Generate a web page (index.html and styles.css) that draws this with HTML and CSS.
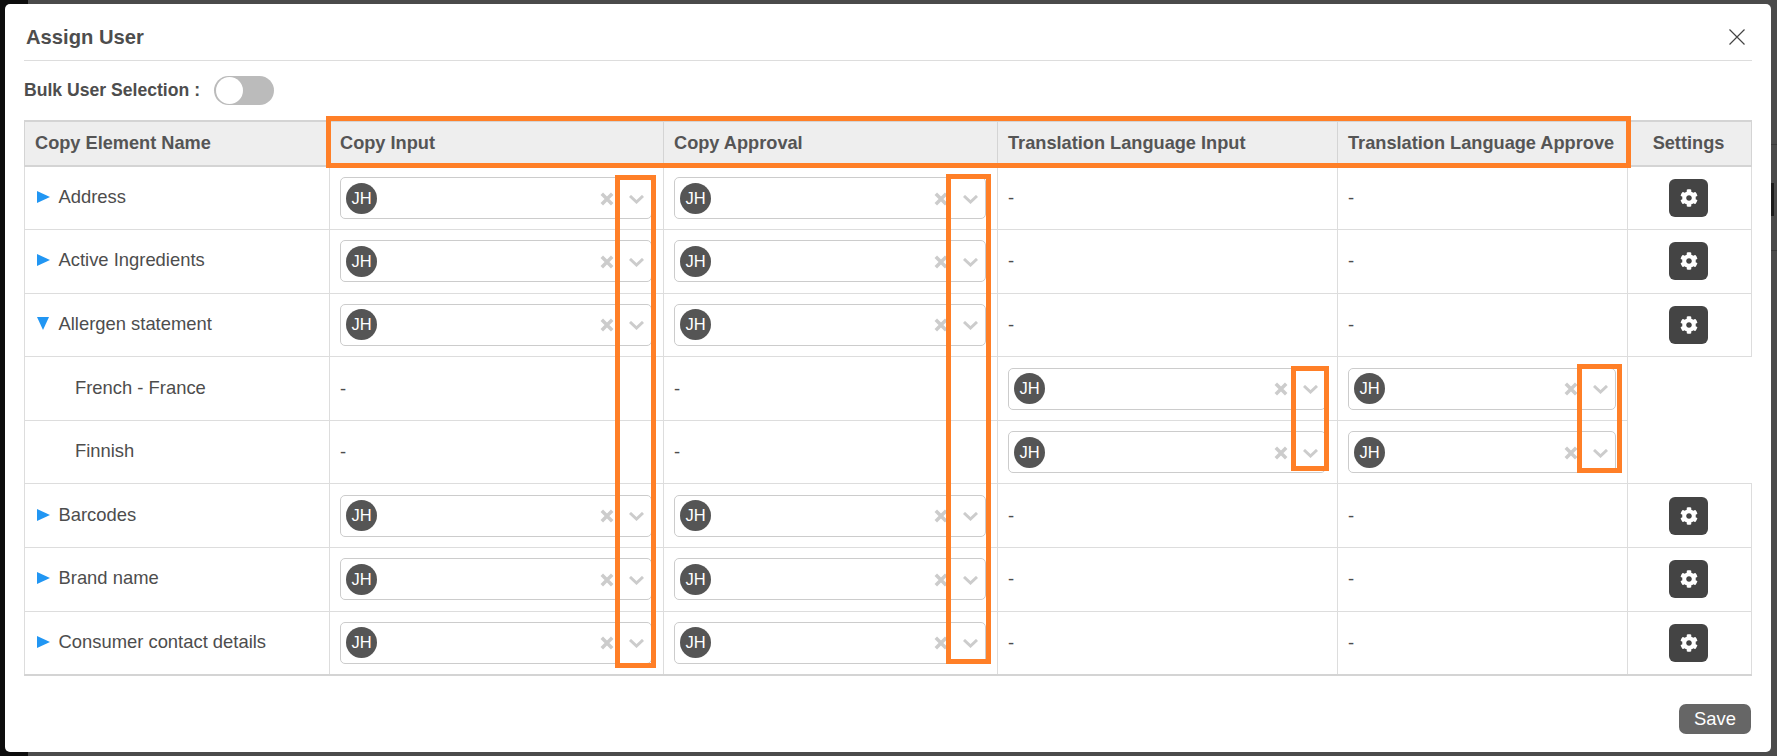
FILE: index.html
```html
<!DOCTYPE html>
<html lang="en">
<head>
<meta charset="utf-8">
<title>Assign User</title>
<link rel="stylesheet" href="styles.css">
</head>
<body>
<svg class="defs" width="0" height="0" aria-hidden="true">
  <symbol id="i-clear" viewBox="0 0 14 14"><path d="M1.800 1.800l10.400 10.400M12.200 1.800l-10.400 10.400" fill="none" stroke="currentColor" stroke-width="3.500"/></symbol>
  <symbol id="i-chev" viewBox="0 0 15 9"><path d="M1 1l6.500 6 6.500-6" fill="none" stroke="currentColor" stroke-width="3"/></symbol>
  <symbol id="i-gear" viewBox="0 0 512 512"><path fill="currentColor" d="M487.400 315.700l-42.600-24.600c4.300-23.200 4.300-47 0-70.200l42.600-24.600c4.900-2.800 7.100-8.600 5.500-14-11.100-35.600-30-67.800-54.700-94.600-3.800-4.100-10-5.100-14.800-2.300L380.800 110c-17.900-15.400-38.500-27.300-60.800-35.100V25.800c0-5.600-3.900-10.500-9.400-11.700-36.700-8.200-74.300-7.800-109.200 0-5.500 1.200-9.400 6.100-9.400 11.700V75c-22.200 7.900-42.800 19.800-60.800 35.100L88.700 85.500c-4.900-2.800-11-1.900-14.800 2.300-24.700 26.700-43.600 58.900-54.700 94.600-1.700 5.400.6 11.200 5.500 14L67.300 221c-4.300 23.200-4.300 47 0 70.200l-42.600 24.600c-4.900 2.800-7.100 8.600-5.500 14 11.100 35.600 30 67.800 54.700 94.600 3.800 4.100 10 5.100 14.800 2.300l42.600-24.600c17.900 15.400 38.500 27.300 60.800 35.100v49.200c0 5.600 3.900 10.500 9.400 11.700 36.700 8.200 74.300 7.800 109.200 0 5.500-1.200 9.400-6.100 9.400-11.700v-49.200c22.200-7.900 42.800-19.800 60.800-35.100l42.600 24.600c4.900 2.800 11 1.900 14.800-2.300 24.700-26.700 43.600-58.900 54.700-94.600 1.500-5.500-.7-11.300-5.600-14.100zM256 336c-44.100 0-80-35.900-80-80s35.900-80 80-80 80 35.900 80 80-35.900 80-80 80z"/></symbol>
</svg>

<div class="modal">
  <header class="modal-head">
    <h1 class="modal-title">Assign User</h1>
    <svg class="close" viewBox="0 0 16 16"><path d="M.5.500l15 15M15.500.500l-15 15" fill="none" stroke="currentColor" stroke-width="1.200"/></svg>
  </header>

  <div class="bulk">
    <span class="bulk-label">Bulk User Selection :</span>
    <span class="toggle"><span class="knob"></span></span>
  </div>

  <table class="grid">
    <colgroup>
      <col class="c1"><col class="c2"><col class="c3"><col class="c4"><col class="c5"><col class="c6">
    </colgroup>
    <thead>
      <tr>
        <th class="first">Copy Element Name</th>
        <th>Copy Input</th>
        <th>Copy Approval</th>
        <th>Translation Language Input</th>
        <th>Translation Language Approve</th>
        <th class="center">Settings</th>
      </tr>
    </thead>
    <tbody>
      <tr>
        <td class="first"><div class="name"><span class="tri"></span>Address</div></td>
        <td><div class="sel"><span class="ava">JH</span><svg class="x"><use href="#i-clear"/></svg><svg class="chev"><use href="#i-chev"/></svg></div></td>
        <td><div class="sel"><span class="ava">JH</span><svg class="x"><use href="#i-clear"/></svg><svg class="chev"><use href="#i-chev"/></svg></div></td>
        <td>-</td>
        <td>-</td>
        <td class="center"><button class="gear"><svg><use href="#i-gear"/></svg></button></td>
      </tr>
      <tr>
        <td class="first"><div class="name"><span class="tri"></span>Active Ingredients</div></td>
        <td><div class="sel"><span class="ava">JH</span><svg class="x"><use href="#i-clear"/></svg><svg class="chev"><use href="#i-chev"/></svg></div></td>
        <td><div class="sel"><span class="ava">JH</span><svg class="x"><use href="#i-clear"/></svg><svg class="chev"><use href="#i-chev"/></svg></div></td>
        <td>-</td>
        <td>-</td>
        <td class="center"><button class="gear"><svg><use href="#i-gear"/></svg></button></td>
      </tr>
      <tr>
        <td class="first"><div class="name"><span class="tri down"></span>Allergen statement</div></td>
        <td><div class="sel"><span class="ava">JH</span><svg class="x"><use href="#i-clear"/></svg><svg class="chev"><use href="#i-chev"/></svg></div></td>
        <td><div class="sel"><span class="ava">JH</span><svg class="x"><use href="#i-clear"/></svg><svg class="chev"><use href="#i-chev"/></svg></div></td>
        <td>-</td>
        <td>-</td>
        <td class="center"><button class="gear"><svg><use href="#i-gear"/></svg></button></td>
      </tr>
      <tr>
        <td class="first"><div class="name child">French - France</div></td>
        <td>-</td>
        <td>-</td>
        <td><div class="sel"><span class="ava">JH</span><svg class="x"><use href="#i-clear"/></svg><svg class="chev"><use href="#i-chev"/></svg></div></td>
        <td><div class="sel"><span class="ava">JH</span><svg class="x"><use href="#i-clear"/></svg><svg class="chev"><use href="#i-chev"/></svg></div></td>
      </tr>
      <tr>
        <td class="first"><div class="name child">Finnish</div></td>
        <td>-</td>
        <td>-</td>
        <td><div class="sel"><span class="ava">JH</span><svg class="x"><use href="#i-clear"/></svg><svg class="chev"><use href="#i-chev"/></svg></div></td>
        <td><div class="sel"><span class="ava">JH</span><svg class="x"><use href="#i-clear"/></svg><svg class="chev"><use href="#i-chev"/></svg></div></td>
      </tr>
      <tr>
        <td class="first"><div class="name"><span class="tri"></span>Barcodes</div></td>
        <td><div class="sel"><span class="ava">JH</span><svg class="x"><use href="#i-clear"/></svg><svg class="chev"><use href="#i-chev"/></svg></div></td>
        <td><div class="sel"><span class="ava">JH</span><svg class="x"><use href="#i-clear"/></svg><svg class="chev"><use href="#i-chev"/></svg></div></td>
        <td>-</td>
        <td>-</td>
        <td class="center"><button class="gear"><svg><use href="#i-gear"/></svg></button></td>
      </tr>
      <tr>
        <td class="first"><div class="name"><span class="tri"></span>Brand name</div></td>
        <td><div class="sel"><span class="ava">JH</span><svg class="x"><use href="#i-clear"/></svg><svg class="chev"><use href="#i-chev"/></svg></div></td>
        <td><div class="sel"><span class="ava">JH</span><svg class="x"><use href="#i-clear"/></svg><svg class="chev"><use href="#i-chev"/></svg></div></td>
        <td>-</td>
        <td>-</td>
        <td class="center"><button class="gear"><svg><use href="#i-gear"/></svg></button></td>
      </tr>
      <tr>
        <td class="first"><div class="name"><span class="tri"></span>Consumer contact details</div></td>
        <td><div class="sel"><span class="ava">JH</span><svg class="x"><use href="#i-clear"/></svg><svg class="chev"><use href="#i-chev"/></svg></div></td>
        <td><div class="sel"><span class="ava">JH</span><svg class="x"><use href="#i-clear"/></svg><svg class="chev"><use href="#i-chev"/></svg></div></td>
        <td>-</td>
        <td>-</td>
        <td class="center"><button class="gear"><svg><use href="#i-gear"/></svg></button></td>
      </tr>
    </tbody>
  </table>

  <footer class="modal-foot">
    <button class="save">Save</button>
  </footer>
</div>

<div class="mark m-head"></div>
<div class="mark m-col1"></div>
<div class="mark m-col2"></div>
<div class="mark m-col3"></div>
<div class="mark m-col4"></div>
</body>
</html>
```

FILE: styles.css
```css
* { box-sizing: border-box; }

html, body { height: 100%; }

body {
  margin: 0;
  position: relative;
  overflow: hidden;
  background:
    linear-gradient(#1c1c1c, #1c1c1c) 1771px 183px / 3px 33px no-repeat,
    linear-gradient(#3a3a3a, #3a3a3a) 1771px 144px / 6px 1px no-repeat,
    linear-gradient(#3a3a3a, #3a3a3a) 1771px 250px / 6px 1px no-repeat,
    linear-gradient(90deg, #0d0d0d 28px, #4b4b4b 28px);
  font-family: "Liberation Sans", Arial, sans-serif;
  color: #4d4d4d;
  padding: 4px 6px 4px 5px;
}

.defs { position: absolute; }

.modal {
  height: 748px;
  background: #fff;
  border-radius: 5px;
  padding: 0 19px;
  display: flex;
  flex-direction: column;
}

.modal-head {
  height: 57px;
  flex: none;
  display: flex;
  align-items: center;
  justify-content: space-between;
  border-bottom: 1px solid #ddd;
  padding: 9px 7px 0 2px;
}

.modal-title {
  margin: 2px 0 0;
  font-size: 20.200px;
  font-weight: 700;
  color: #4d4d4d;
}

.close { width: 16px; height: 16px; color: #444; }

.bulk {
  flex: none;
  height: 59px;
  display: flex;
  align-items: center;
  gap: 14px;
  padding-bottom: 1px;
}

.bulk-label { font-size: 17.600px; font-weight: 700; color: #4d4d4d; }

.toggle {
  width: 60px;
  height: 29px;
  border-radius: 15px;
  background: #bbb;
  padding: 1px 2px;
  display: block;
}

.knob {
  display: block;
  width: 27px;
  height: 27px;
  border-radius: 50%;
  background: #fff;
}

.grid {
  flex: none;
  width: 1727px;
  table-layout: fixed;
  border-collapse: collapse;
  font-size: 18.400px;
  color: #4d4d4d;
}

.c1 { width: 305px; }
.c2 { width: 334px; }
.c3 { width: 334px; }
.c4 { width: 340px; }
.c5 { width: 290px; }
.c6 { width: 124px; }

.grid th {
  height: 45px;
  background: #eee;
  border: 2px solid #d4d4d4;
  border-left-width: 1px;
  border-right-width: 1px;
  padding: 0 10px;
  text-align: left;
  font-weight: 700;
  font-size: 18.200px;
  color: #555;
  white-space: nowrap;
}

.grid th.center, .grid td.center { text-align: center; padding: 0 12px 0 10px; }

.grid td {
  height: 63.600px;
  border: 1px solid #ddd;
  padding: 0 11px 0 10px;
  vertical-align: middle;
}

.grid tbody tr:last-child td { border-bottom: 2px solid #d4d4d4; }

.name {
  display: flex;
  align-items: center;
  padding-left: 2px;
  margin-top: -2px;
}

.name.child { padding-left: 40px; }

.tri {
  width: 0;
  height: 0;
  border-style: solid;
  border-width: 6px 0 6px 13px;
  border-color: transparent transparent transparent #2196f3;
  margin-right: 8.500px;
}

.tri.down {
  border-width: 13px 6.500px 0 6.500px;
  border-color: #2196f3 transparent transparent transparent;
  margin-right: 9.500px;
}

.sel {
  height: 42px;
  border: 1px solid #ccc;
  border-radius: 5px;
  display: flex;
  align-items: center;
  padding: 0 7px 0 5px;
}

.ava {
  width: 31px;
  height: 31px;
  border-radius: 50%;
  background: #555;
  color: #fff;
  font-size: 16.500px;
  display: flex;
  align-items: center;
  justify-content: center;
  margin-right: auto;
}

.x { width: 14px; height: 14px; color: #ccc; margin-top: 1px; }

.chev { width: 15px; height: 9px; color: #ccc; margin-left: 15px; margin-top: 2px; }

.gear {
  width: 39px;
  height: 38px;
  padding: 0;
  border: 0;
  border-radius: 6px;
  background: #444;
  color: #fff;
  display: inline-flex;
  align-items: center;
  justify-content: center;
  vertical-align: middle;
}

.gear svg { width: 18px; height: 18px; }

.modal-foot {
  flex: 1;
  display: flex;
  justify-content: flex-end;
  padding: 28px 1px 0 0;
}

.save {
  width: 72px;
  height: 30px;
  padding: 0;
  border: 0;
  border-radius: 7px;
  background: #666;
  color: #fff;
  font: 18.400px "Liberation Sans", Arial, sans-serif;
}

.mark {
  position: absolute;
  border: 5px solid #ff7f27;
  pointer-events: none;
}

.m-head { left: 326px; top: 116px; width: 1305px; height: 52px; }
.m-col1 { left: 615px; top: 175px; width: 41px; height: 493px; }
.m-col2 { left: 946px; top: 174px; width: 45px; height: 490px; }
.m-col3 { left: 1291px; top: 366px; width: 38px; height: 105px; }
.m-col4 { left: 1577px; top: 364px; width: 45px; height: 109px; }
```
